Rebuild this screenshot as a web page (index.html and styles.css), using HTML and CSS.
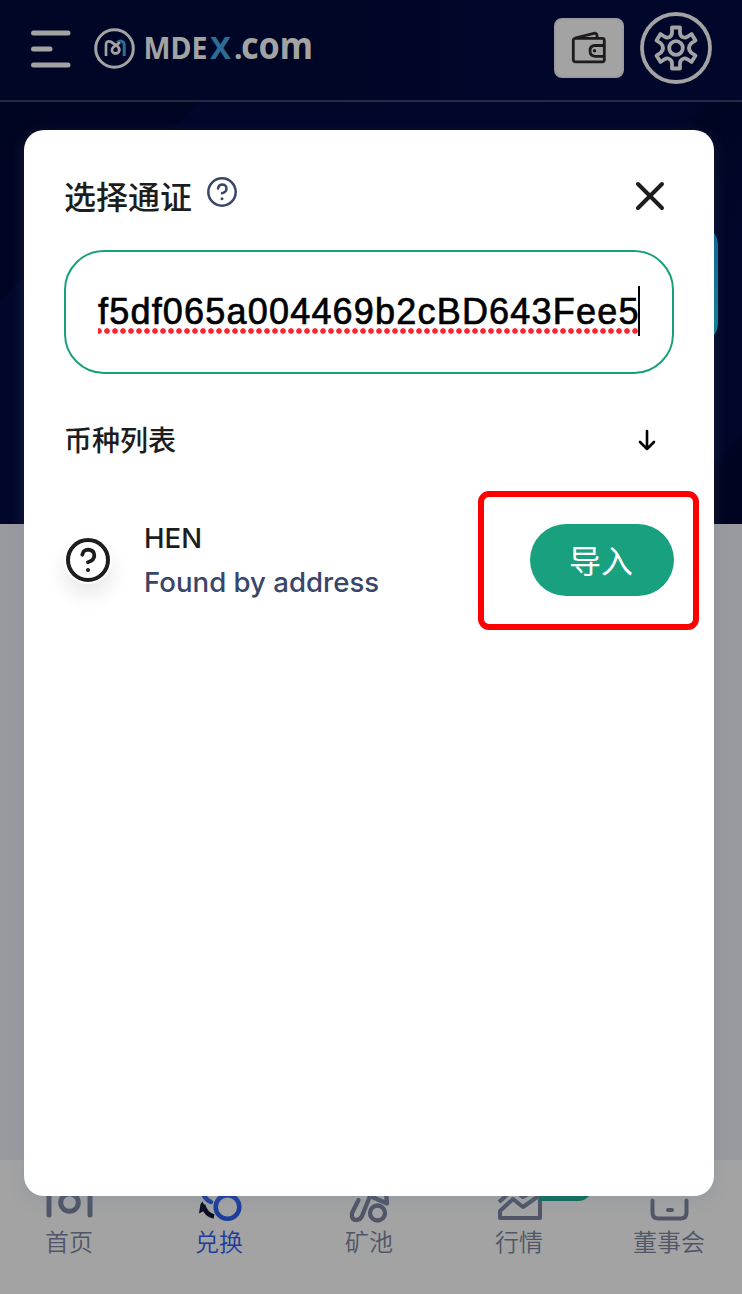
FILE: index.html
```html
<!DOCTYPE html>
<html lang="zh-CN">
<head>
<meta charset="utf-8">
<title>MDEX.com</title>
<link rel="stylesheet" href="styles.css">
</head>
<body>
<div class="page">
  <header class="header">
    <svg class="menu-icon" viewBox="0 0 40 40"><path d="M2.500 3H37M2.500 19H19M2.500 35H37" fill="none" stroke="#a3a3a3" stroke-width="5" stroke-linecap="round"/></svg>
    <svg class="brand" viewBox="0 0 220 42">
      <circle cx="21.500" cy="21.500" r="18.800" fill="none" stroke="#a3a3a3" stroke-width="3"/>
      <path d="M24 15.500q3-2 5-1.200 2.200.8 2.200 3.700v11" fill="none" stroke="#2d6c94" stroke-width="3"/>
      <path d="M13 29V17.500q.3-4.500 5-2.700l6.500 4.500q3 3 1.300 5.500-2 2.500-5.200 1.200-3-2-.6-5.500l7-5" fill="none" stroke="#a3a3a3" stroke-width="2.700"/>
      <text class="brand-text" y="32"><tspan x="50.500" textLength="64" lengthAdjust="spacingAndGlyphs">MDE</tspan><tspan x="117" fill="#2d6c94" textLength="21" lengthAdjust="spacingAndGlyphs">X</tspan><tspan x="141">.</tspan></text>
      <text class="brand-text brand-tail" x="148" y="32" textLength="72" lengthAdjust="spacingAndGlyphs">com</text>
    </svg>
    <div class="header-actions">
      <button class="wallet" aria-label="钱包">
        <svg width="36" height="32" viewBox="0 0 36 32" fill="none" stroke="#1d1d1d" stroke-width="2.800"><rect x="2.300" y="6.300" width="31" height="23.500" rx="2"/><path d="M4 6 23 1.300q2.800-.3 3 2V6M33 13.500H24q-5 0-5 5.300t5 5.500h9" stroke-linejoin="round"/><circle cx="23.500" cy="18.700" r="1.700" fill="#1d1d1d" stroke="none"/></svg>
      </button>
      <svg width="72" height="72" viewBox="0 0 72 72" fill="none" stroke="#a3a3a3" stroke-width="3.800"><circle cx="36" cy="36" r="34"/><circle cx="36" cy="36" r="6.800"/><path stroke-linejoin="round" d="M32 15.500h8v5q0 4 4 5 1.500.4 3.500-.8l4-2.700 4 6.500-4.500 3q-4 4.500 0 9l4.500 3-4 6.500-4-2.700q-2-1.200-3.500-.8-4 1-4 5v5h-8v-5q0-4-4-5-1.500-.4-3.500.8l-4 2.700-4-6.500 4.500-3q4-4.500 0-9l-4.500-3 4-6.500 4 2.700q2 1.200 3.500.8 4-1 4-5z"/></svg>
    </div>
  </header>
  <section class="hero"><div class="swap-card"></div></section>
  <main class="content"></main>
  <nav class="tabs">
    <a class="tab"><svg viewBox="0 0 60 60" fill="none" stroke="#505668" stroke-width="5" stroke-linecap="round"><path d="M10 0V53M51 0V53"/><circle cx="30.500" cy="40.500" r="8.800"/></svg><span>首页</span></a>
    <a class="tab active"><svg viewBox="0 0 60 60" fill="none" stroke="#1c3d9c" stroke-width="4.500"><circle cx="38.500" cy="45" r="11.800"/><path d="M14 32q3 6 8 8" stroke-linecap="round"/><path d="M14 43q3 10 11 11.500" stroke="#0b0c22" stroke-width="4.500"/><path d="M10 51.500 11.500 42l2-2.500 4 8z" fill="#0b0c22" stroke="none"/></svg><span>兑换</span></a>
    <a class="tab"><svg viewBox="0 0 60 60" fill="none" stroke="#505668" stroke-width="4.300"><path d="M19.500 38 13 51q-1 7 4.500 7 3.500 0 5.500-4l8-20 17 7.500-1-10" stroke-linecap="round" stroke-linejoin="round"/><circle cx="38.500" cy="51" r="7.500"/></svg><span>矿池</span></a>
    <a class="tab"><svg viewBox="0 0 60 60" fill="none" stroke="#505668" stroke-width="4"><path d="M10 40l8-7M31 33l3 2 4-2M51 32v24H11V49l13-12 10 8 17-12" stroke-linejoin="round"/></svg><span>行情</span><i class="tab-badge"></i></a>
    <a class="tab"><svg viewBox="0 0 60 60" fill="none" stroke="#505668" stroke-width="4" stroke-linecap="round"><path d="M13.500 38.500v12q0 6 6 6h22q6 0 6-6v-12M29 48h4"/></svg><span>董事会</span></a>
  </nav>
</div>
<div class="modal" role="dialog">
  <div class="modal-head">
    <h1>选择通证</h1>
    <svg class="help" viewBox="0 0 30 30" fill="none" stroke="#394569" stroke-width="2.500" stroke-linecap="round"><circle cx="15" cy="15" r="13.700"/><path d="M11 11.500q.7-4 4.500-4 4 .5 4 4t-4.500 4.700"/><path d="M15 21.700h.01" stroke-width="3"/></svg>
    <svg class="close" viewBox="0 0 28 28"><path d="M2 2 26 26M26 2 2 26" stroke="#1d1d1d" stroke-width="4" stroke-linecap="round"/></svg>
  </div>
  <div class="search"><div class="address">f5df065a004469b2cBD643Fee5</div></div>
  <div class="list-head"><h2>币种列表</h2><svg width="18" height="22" viewBox="0 0 18 22" fill="none" stroke="#000" stroke-width="2.600" stroke-linecap="round" stroke-linejoin="round"><path d="M9 2V20M2 13l7 7 7-7"/></svg></div>
  <div class="token">
    <svg class="token-icon" viewBox="0 0 48 48" fill="none" stroke="#1d1d1d" stroke-width="4" stroke-linecap="round"><circle cx="24" cy="24" r="20"/><path d="M18.300 18.700q1-5 6-5 6 .7 6 5.800 0 4.800-6.300 6.700" stroke-width="3.800"/><path d="M24 34h.01"/></svg>
    <div class="token-info"><strong>HEN</strong><span>Found by address</span></div>
    <div class="import-wrap"><button class="import">导入</button><i class="marker"></i></div>
  </div>
</div>
</body>
</html>
```
FILE: styles.css
```css
* { box-sizing: border-box; }
body { margin: 0; width: 742px; height: 1294px; overflow: hidden; position: relative; font-family: Inter, "Noto Sans CJK SC", sans-serif; }
button { border: 0; padding: 0; font-family: inherit; }
h1, h2 { margin: 0; }
svg { display: block; flex: none; overflow: visible; }
.page { height: 1294px; display: flex; flex-direction: column; background: #999a9f; }
.header { height: 102px; flex: none; display: flex; align-items: flex-start; padding: 12px 30px 0 31px; background: linear-gradient(90deg, #000625 40%, #00072b 75%); border-bottom: 2px solid #262b44; }
.menu-icon { width: 40px; height: 40px; margin-top: 18px; }
.brand { width: 220px; height: 42px; margin: 15px 0 0 22px; }
.brand-text { font-family: "Noto Sans", sans-serif; font-size: 30px; font-weight: 700; fill: #a3a3a3; }
.brand-tail { font-size: 37px; }
.header-actions { display: flex; align-items: center; gap: 16px; margin-left: auto; }
.wallet { width: 70px; height: 60px; border-radius: 8px; background: #a3a3a3; border: 2px solid #999ba0; display: flex; align-items: center; justify-content: center; }
.hero { height: 422px; flex: none; padding: 123px 24px 0; background: linear-gradient(135deg, #000522 17%, #00072a 17.2%, #00072a 60%, #000522 62%, #00072a 75%, #00072a 92%, #000421 93%); }
.swap-card { height: 118px; border-radius: 20px; background: linear-gradient(#0c6296, #0b8795); }
.content { flex: 1; }
.tabs { height: 134px; flex: none; display: grid; grid-template-columns: repeat(5, 150px); margin-left: -6px; background: #a3a3a3; color: #505668; }
.tab { position: relative; display: flex; flex-direction: column; align-items: center; font-size: 24px; line-height: 32px; font-weight: 350; }
.tab svg { width: 60px; height: 60px; margin: 2px 0 5px; }
.tab.active { color: #1c3d9c; }
.tab-badge { position: absolute; left: 96px; top: 14px; width: 52px; height: 27px; border-radius: 0 14px 14px 0; background: #0c6e5b; }
.modal { position: absolute; left: 24px; top: 130px; width: 690px; height: 1066px; padding: 40px; border-radius: 20px; background: #fff; box-shadow: 0 4px 16px rgba(95, 125, 155, .2); }
.modal-head { display: flex; height: 80px; padding: 2px 10px 0 0; color: #1d1d1d; }
.modal-head h1 { font-size: 32px; line-height: 52px; font-weight: 500; }
.help { width: 30px; height: 30px; margin: 5px 0 0 15px; }
.close { width: 28px; height: 28px; margin: 10px 0 0 auto; }
.search { height: 124px; border: 2px solid #179f7c; border-radius: 40px; padding: 34px 32px; }
.address { position: relative; width: 542px; height: 50px; border-right: 2px solid #000; font: 36px/51px "Liberation Sans", Arial, sans-serif; letter-spacing: 1.200px; color: #000; white-space: nowrap; -webkit-text-stroke: .7px #000; }
.address::after { content: ""; position: absolute; left: 0; right: 0; top: 42px; height: 6px; background: radial-gradient(circle, #fb2632 0 2.400px, transparent 3.200px) -3px 0 / 8px 6px repeat-x; }
.list-head { height: 132px; display: flex; align-items: center; justify-content: space-between; padding-right: 18px; color: #1d1d1d; }
.list-head h2 { font-size: 28px; line-height: 40px; font-weight: 500; padding-top: 1px; }
.token { height: 108px; display: flex; align-items: center; }
.token-icon { width: 48px; height: 48px; border-radius: 50%; box-shadow: 0 12px 20px rgba(0, 0, 0, .09); }
.token-info { display: flex; flex-direction: column; margin-left: 32px; font-size: 27.600px; line-height: 44px; font-weight: 500; color: #394569; }
.token-info strong { font-weight: 500; color: #1d1d1d; }
.import-wrap { position: relative; margin-left: auto; }
.import { display: block; width: 144px; height: 72px; padding: 0 2px 3px 0; border-radius: 36px; background: #19a07e; color: #fff; font-size: 32px; font-weight: 400; }
.marker { position: absolute; left: -52px; top: -33px; width: 221px; height: 139px; border: 6px solid #f00; border-radius: 11px; }
```
